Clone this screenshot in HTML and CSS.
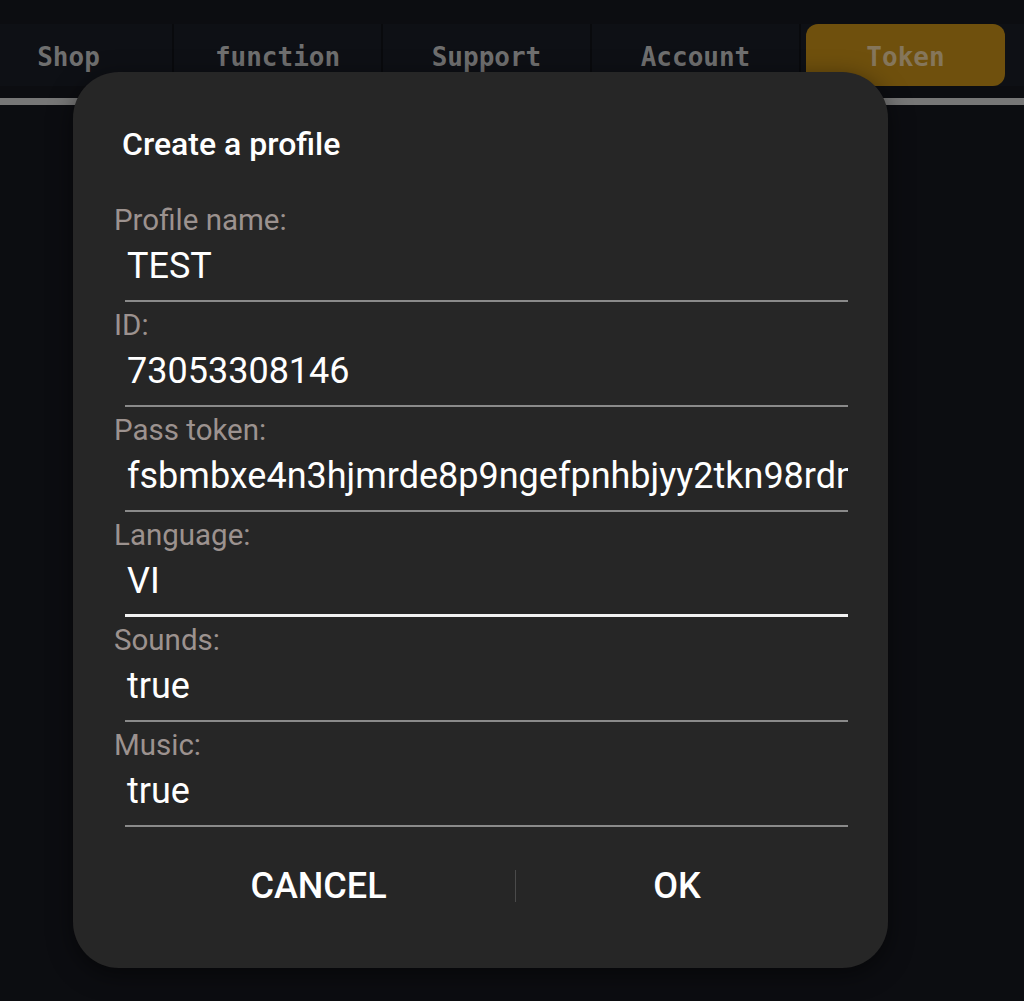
FILE: index.html
```html
<!DOCTYPE html>
<html lang="en">
<head>
  <meta charset="UTF-8">
  <meta name="viewport" content="width=device-width, initial-scale=1.0">
  <title>Create a profile</title>
  <link rel="stylesheet" href="styles.css">
</head>
<body>

  <!-- Top tabs -->
  <header class="top">
    <nav class="tabs">
      <div class="tab">Shop</div>
      <div class="tab">function</div>
      <div class="tab">Support</div>
      <div class="tab">Account</div>
      <div class="tab active"><span>Token</span></div>
    </nav>
    <div class="tab-line"></div>
  </header>

  <!-- Profile dialog -->
  <div class="dialog">
    <h2 class="dialog-title">Create a profile</h2>

    <div class="field">
      <div class="field-label">Profile name:</div>
      <div class="field-value">TEST</div>
    </div>
    <div class="field">
      <div class="field-label">ID:</div>
      <div class="field-value">73053308146</div>
    </div>
    <div class="field">
      <div class="field-label">Pass token:</div>
      <div class="field-value">fsbmbxe4n3hjmrde8p9ngefpnhbjyy2tkn98rdmq</div>
    </div>
    <div class="field">
      <div class="field-label">Language:</div>
      <div class="field-value focused">VI</div>
    </div>
    <div class="field">
      <div class="field-label">Sounds:</div>
      <div class="field-value">true</div>
    </div>
    <div class="field">
      <div class="field-label">Music:</div>
      <div class="field-value">true</div>
    </div>

    <div class="dialog-buttons">
      <button class="btn btn-cancel">CANCEL</button>
      <span class="btn-divider"></span>
      <button class="btn">OK</button>
    </div>
  </div>

</body>
</html>
```

FILE: styles.css
```css
/* Global styles */
body {
  margin: 0;
  padding: 0;
  background-color: #0c0d11;
  font-family: Roboto, 'Noto Sans', sans-serif;
  color: white;
  height: 1001px;
  overflow: hidden;
}

/* Top tabs */
.top {
  padding-top: 24px;
}

.tabs {
  display: flex;
  margin-left: -35px;
  height: 62px;
  background-color: #0e1015;
}

.tab {
  width: 209px;
  flex: none;
  display: flex;
  align-items: center;
  justify-content: center;
  padding-top: 4px;
  font-family: 'DejaVu Sans Mono', monospace;
  font-size: 26px;
  font-weight: bold;
  color: #6f6f6f;
  border-right: 2px solid #090a0d;
  box-sizing: border-box;
}

.tab.active {
  border-right: none;
  padding: 0 5px;
}

.tab.active span {
  display: flex;
  align-items: center;
  justify-content: center;
  padding-top: 4px;
  width: 100%;
  height: 100%;
  box-sizing: border-box;
  background-color: #6f500d;
  border-radius: 12px;
  color: #85765b;
}

.tab-line {
  height: 7px;
  margin-top: 12px;
  background-color: #777777;
}

/* Dialog */
.dialog {
  position: absolute;
  left: 73px;
  top: 72px;
  width: 815px;
  box-sizing: border-box;
  padding: 40px 40px 50px 41px;
  background-color: #262626;
  border-radius: 46px;
  box-shadow: 0 6px 24px rgba(0, 0, 0, 0.5);
}

.dialog-title {
  margin: 0 0 29px 8px;
  font-size: 32px;
  font-weight: 500;
  line-height: 64px;
}

.field-label {
  margin-top: 8px;
  font-size: 29.5px;
  line-height: 30px;
  color: #9c928f;
}

.field-value {
  margin-left: 11px;
  padding: 8px 0 11px 2px;
  font-size: 36px;
  line-height: 46px;
  white-space: nowrap;
  overflow: hidden;
  border-bottom: 2px solid #8a8a8a;
}

.field-value.focused {
  padding-bottom: 10px;
  border-bottom: 3px solid #f2f2f2;
}

/* Buttons */
.dialog-buttons {
  display: grid;
  grid-template-columns: 401px 1px 322px;
  align-items: center;
  margin-top: 27px;
  height: 64px;
}

.btn {
  background: none;
  border: none;
  padding: 0;
  font-family: Roboto, sans-serif;
  font-size: 36px;
  font-weight: 500;
  color: white;
  cursor: pointer;
}

.btn-cancel {
  padding-left: 8px;
}

.btn-divider {
  height: 32px;
  background-color: #4a4a4a;
}
```
